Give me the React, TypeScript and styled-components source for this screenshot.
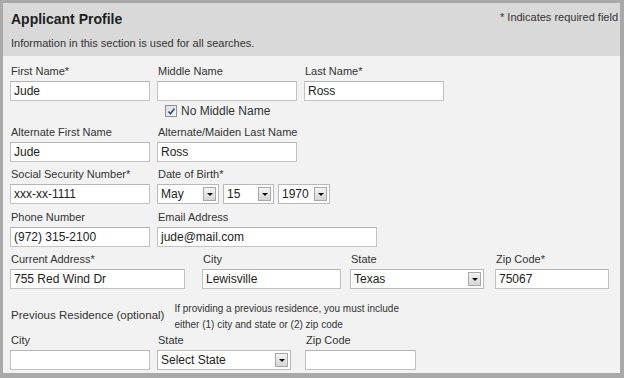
import React from 'react';
import styled, { createGlobalStyle } from 'styled-components';

const GlobalStyle = createGlobalStyle`
  html, body {
    margin: 0;
    padding: 0;
    background: #ffffff;
  }
  body {
    font-family: "Liberation Sans", Arial, sans-serif;
  }
`;

const Frame = styled.div`
  width: 624px;
  height: 378px;
  box-sizing: border-box;
  border-style: solid;
  border-color: #a9a9a9;
  border-width: 3px 4px 5px 3px;
  background: #f2f2f2;
  display: flex;
  flex-direction: column;
  overflow: hidden;
`;

const Header = styled.div`
  background: #d9d9d9;
  height: 53px;
  box-sizing: border-box;
  padding: 8px 2px 0 8px;
  display: flex;
  justify-content: space-between;
  align-items: flex-start;
`;

const Title = styled.h1`
  margin: 0;
  font-size: 14px;
  line-height: 17px;
  font-weight: bold;
  color: #1e1e1e;
`;

const Subtitle = styled.p`
  margin: 9px 0 0 0;
  font-size: 11px;
  line-height: 13px;
  color: #333;
`;

const RequiredNote = styled.div`
  margin-top: 0;
  font-size: 11px;
  line-height: 13px;
  color: #333;
`;

const Body = styled.div`
  padding: 9px 0 0 7px;
  display: flex;
  flex-direction: column;
`;

const Row = styled.div<{ $mt?: number }>`
  display: flex;
  align-items: flex-start;
  margin-top: ${p => p.$mt ?? 6}px;
`;

const Field = styled.div<{ $w: number; $ml?: number }>`
  width: ${p => p.$w}px;
  margin-left: ${p => p.$ml ?? 0}px;
  display: flex;
  flex-direction: column;
`;

const Label = styled.label`
  font-size: 11px;
  line-height: 13px;
  color: #333;
  margin: 0 0 3px 1px;
  white-space: nowrap;
`;

const TextBox = styled.div`
  height: 20px;
  box-sizing: border-box;
  border: 1px solid #c3c3c3;
  border-top-color: #b5b5b5;
  background: #fff;
  font-size: 12px;
  line-height: 18px;
  color: #222;
  padding: 0 3px;
  white-space: nowrap;
  overflow: hidden;
`;

const SelectBox = styled.div<{ $w: number; $ml?: number }>`
  width: ${p => p.$w}px;
  margin-left: ${p => p.$ml ?? 0}px;
  height: 20px;
  box-sizing: border-box;
  border: 1px solid #b9b9b9;
  background: #fff;
  display: flex;
  align-items: center;
  justify-content: space-between;
  padding: 0 2px 0 3px;
  font-size: 12px;
  color: #222;
`;

const DropButton = styled.span`
  width: 13px;
  height: 14px;
  box-sizing: border-box;
  border: 1px solid #a8a8a8;
  background: linear-gradient(#f4f4f4, #d6d6d6);
  display: flex;
  align-items: center;
  justify-content: center;
`;

const Arrow = styled.span`
  width: 0;
  height: 0;
  border-left: 3px solid transparent;
  border-right: 3px solid transparent;
  border-top: 3px solid #111;
  margin-top: 1px;
`;

const SelectGroup = styled.div`
  display: flex;
`;

const CheckRow = styled.div`
  display: flex;
  align-items: center;
  height: 18px;
  margin: 1px 0 0 155px;
  font-size: 12px;
  color: #333;
  gap: 4px;
`;

const CheckBoxIcon = styled.span`
  width: 12px;
  height: 12px;
  box-sizing: border-box;
  border: 1px solid #8e8f8f;
  background: linear-gradient(135deg, #dcdcdc, #f7f7f7);
  display: flex;
  align-items: center;
  justify-content: center;
`;

const PrevSection = styled.div`
  display: flex;
  align-items: flex-start;
  margin: 12px 0 0 1px;
  height: 33px;
`;

const PrevTitle = styled.div`
  font-size: 11.5px;
  line-height: 14px;
  color: #333;
  margin-top: 7px;
`;

const PrevNote = styled.div`
  font-size: 10px;
  line-height: 16px;
  color: #333;
  margin-left: 10px;
`;

const Select: React.FC<{ w: number; ml?: number; value: string }> = ({ w, ml, value }) => (
  <SelectBox $w={w} $ml={ml}>
    <span>{value}</span>
    <DropButton>
      <Arrow />
    </DropButton>
  </SelectBox>
);

const App: React.FC = () => {
  return (
    <>
      <GlobalStyle />
      <Frame>
        <Header>
          <div>
            <Title>Applicant Profile</Title>
            <Subtitle>Information in this section is used for all searches.</Subtitle>
          </div>
          <RequiredNote>* Indicates required field</RequiredNote>
        </Header>

        <Body>
          <Row $mt={0}>
            <Field $w={140}>
              <Label>First Name*</Label>
              <TextBox>Jude</TextBox>
            </Field>
            <Field $w={140} $ml={7}>
              <Label>Middle Name</Label>
              <TextBox />
            </Field>
            <Field $w={140} $ml={7}>
              <Label>Last Name*</Label>
              <TextBox>Ross</TextBox>
            </Field>
          </Row>
          <CheckRow>
            <CheckBoxIcon>
              <svg width="9" height="9" viewBox="0 0 9 9">
                <path d="M1.5 4.5 L3.5 6.8 L7.5 1.5" fill="none" stroke="#2a4f8f" strokeWidth="1.6" />
              </svg>
            </CheckBoxIcon>
            No Middle Name
          </CheckRow>

          <Row>
            <Field $w={140}>
              <Label>Alternate First Name</Label>
              <TextBox>Jude</TextBox>
            </Field>
            <Field $w={140} $ml={7}>
              <Label>Alternate/Maiden Last Name</Label>
              <TextBox>Ross</TextBox>
            </Field>
          </Row>

          <Row>
            <Field $w={140}>
              <Label>Social Security Number*</Label>
              <TextBox>xxx-xx-1111</TextBox>
            </Field>
            <Field $w={180} $ml={7}>
              <Label>Date of Birth*</Label>
              <SelectGroup>
                <Select w={62} value="May" />
                <Select w={51} ml={4} value="15" />
                <Select w={52} ml={4} value="1970" />
              </SelectGroup>
            </Field>
          </Row>

          <Row $mt={7}>
            <Field $w={140}>
              <Label>Phone Number</Label>
              <TextBox>(972) 315-2100</TextBox>
            </Field>
            <Field $w={220} $ml={7}>
              <Label>Email Address</Label>
              <TextBox>jude@mail.com</TextBox>
            </Field>
          </Row>

          <Row $mt={6}>
            <Field $w={175}>
              <Label>Current Address*</Label>
              <TextBox>755 Red Wind Dr</TextBox>
            </Field>
            <Field $w={139} $ml={17}>
              <Label>City</Label>
              <TextBox>Lewisville</TextBox>
            </Field>
            <Field $w={134} $ml={9}>
              <Label>State</Label>
              <Select w={134} value="Texas" />
            </Field>
            <Field $w={114} $ml={11}>
              <Label>Zip Code*</Label>
              <TextBox>75067</TextBox>
            </Field>
          </Row>

          <PrevSection>
            <PrevTitle>Previous Residence (optional)</PrevTitle>
            <PrevNote>
              If providing a previous residence, you must include
              <br />
              either (1) city and state or (2) zip code
            </PrevNote>
          </PrevSection>

          <Row $mt={0}>
            <Field $w={140}>
              <Label>City</Label>
              <TextBox />
            </Field>
            <Field $w={134} $ml={7}>
              <Label>State</Label>
              <Select w={134} value="Select State" />
            </Field>
            <Field $w={111} $ml={14}>
              <Label>Zip Code</Label>
              <TextBox />
            </Field>
          </Row>
        </Body>
      </Frame>
    </>
  );
};

export default App;
